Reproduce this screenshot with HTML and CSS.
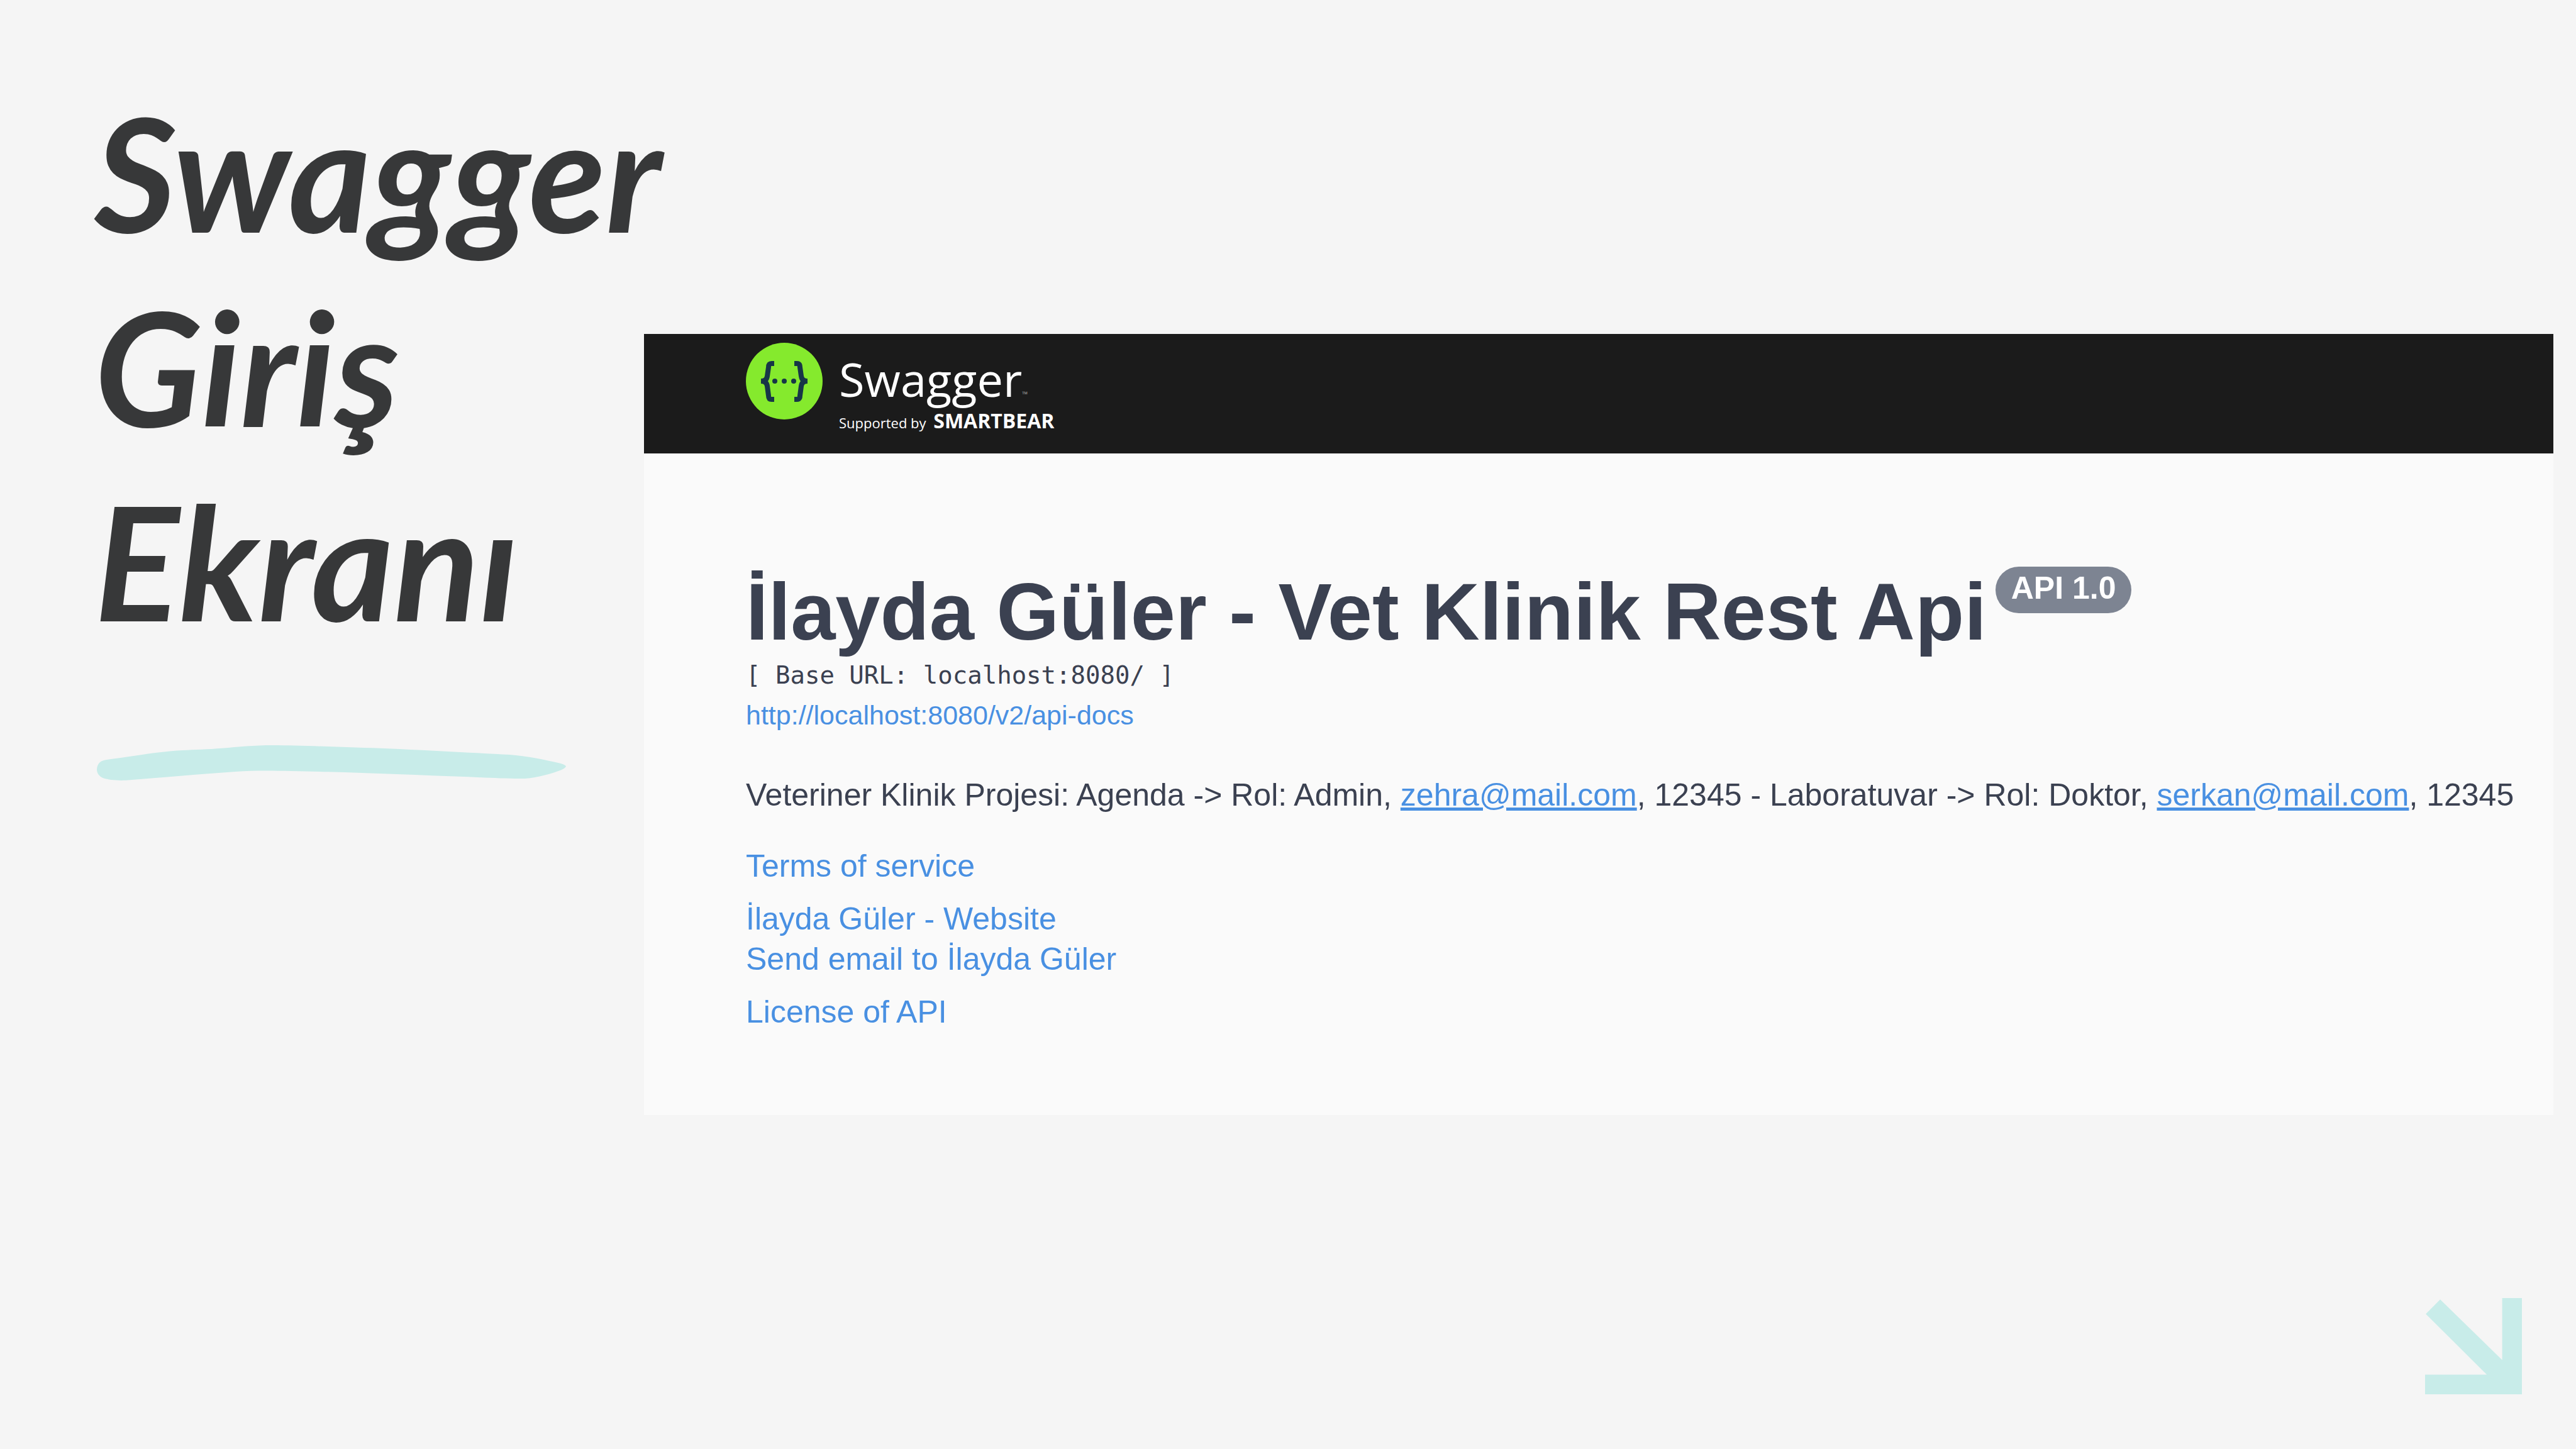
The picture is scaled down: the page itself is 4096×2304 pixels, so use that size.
FILE: index.html
```html
<!DOCTYPE html>
<html lang="tr">
<head>
<meta charset="utf-8">
<meta name="viewport" content="width=device-width, initial-scale=1">
<title>Swagger Giriş Ekranı</title>
<link rel="stylesheet" href="styles.css">
</head>
<body>
<div class="slide">
  <header class="intro">
    <h1 class="intro-title"><span>Swagger</span> <span>Giriş</span> <span>Ekranı</span></h1>
    <svg class="brush" viewBox="95 258 1370 245" preserveAspectRatio="none" aria-hidden="true">
      <path d="M130 356C190 339 270 303 345 293C380 289 420 287 460 279C510 269 550 258 610 258C700 259 850 274 945 281C1060 293 1190 310 1300 324C1350 333 1405 360 1450 385Q1465 397 1465 406Q1463 417 1450 431C1420 457 1385 483 1345 490C1300 492 1240 485 1180 478C1040 466 900 452 770 443C700 438 640 437 590 435C560 435 530 437 500 442C390 460 290 482 180 502C150 505 130 498 115 488C100 473 95 450 95 424C97 385 104 361 130 356Z"/>
    </svg>
  </header>

  <main class="panel">
    <div class="topbar">
      <a class="logo" href="#">
        <svg class="logo-mark" viewBox="0 0 122 122" aria-hidden="true">
          <circle class="mark-disc" cx="61" cy="61" r="61"/>
          <path class="mark-brace" d="M45 33H41Q36 33 36 39L34 53Q33 61 24 61Q33 61 34 69L36 84Q36 90 41 90H45"/>
          <path class="mark-brace" d="M77 33H81Q86 33 86 39L88 53Q89 61 98 61Q89 61 88 69L86 84Q86 90 81 90H77"/>
          <g class="mark-dots"><circle cx="46" cy="61" r="4"/><circle cx="61" cy="61" r="4"/><circle cx="76" cy="61" r="4"/></g>
        </svg>
        <span class="logo-text">
          <span class="wordmark">Swagger<small class="tm">™</small></span>
          <span class="support">Supported by <strong class="brand">SMARTBEAR</strong></span>
        </span>
      </a>
    </div>

    <section class="info">
      <div class="info-head">
        <h2 class="info-title">İlayda Güler - Vet Klinik Rest Api</h2>
        <span class="version">API 1.0</span>
      </div>
      <p class="base-url">[ Base URL: localhost:8080/ ]</p>
      <a class="docs-link" href="#">http://localhost:8080/v2/api-docs</a>
      <p class="description">Veteriner Klinik Projesi: Agenda -&gt; Rol: Admin, <a href="#">zehra@mail.com</a>, 12345 - Laboratuvar -&gt; Rol: Doktor, <a href="#">serkan@mail.com</a>, 12345</p>
      <div class="links">
        <a href="#">Terms of service</a>
        <div class="contact">
          <a href="#">İlayda Güler - Website</a>
          <a href="#">Send email to İlayda Güler</a>
        </div>
        <a href="#">License of API</a>
      </div>
    </section>
  </main>

  <footer class="corner">
    <svg class="arrow" viewBox="144 131 678 672" preserveAspectRatio="none" aria-hidden="true">
      <path d="M684 131H822V803H144V666H576L149 242L250 141L684 564Z"/>
    </svg>
  </footer>
</div>
</body>
</html>
```
FILE: styles.css
```css
* {
  box-sizing: border-box;
}

body {
  margin: 0;
  background: #f5f5f5;
  color: #3b4151;
  font-family: "Liberation Sans", Arial, sans-serif;
}

h1, h2, p {
  margin: 0;
}

a {
  color: #4990e2;
  text-decoration: none;
}

svg {
  display: block;
}

.slide {
  min-height: 100vh;
  display: grid;
  grid-template-columns: minmax(0, 1fr) minmax(0, 3fr);
  grid-template-rows: auto 1fr;
}

/* Left column: heading and brush stroke */
.intro {
  padding: 118px 0 0 150px;
}

.intro-title {
  color: #373839;
  font-family: Lato, sans-serif;
  font-size: 252px;
  font-style: italic;
  font-weight: 700;
  line-height: 309px;
  white-space: nowrap;
}

.intro-title span {
  display: block;
}

.brush {
  width: 746px;
  height: 56px;
  margin: 140px 0 0 4px;
  fill: #c8ece9;
}

/* Swagger panel */
.panel {
  margin: 531px 36px 0 0;
  background: #fafafa;
}

.topbar {
  height: 190px;
  padding-left: 162px;
  background: #1b1b1b;
}

.logo {
  display: inline-flex;
  align-items: flex-start;
  gap: 26px;
  color: #fff;
  font-family: "Open Sans", sans-serif;
}

.logo-mark {
  width: 122px;
  height: 122px;
  margin-top: 14px;
}

.mark-disc {
  fill: #85ea2d;
}

.mark-brace {
  fill: none;
  stroke: #173647;
  stroke-width: 8;
}

.mark-dots {
  fill: #173647;
}

.logo-text {
  display: flex;
  flex-direction: column;
  padding-top: 24px;
}

.wordmark {
  font-size: 74px;
  line-height: 96px;
}

.tm {
  color: #999;
  font-size: 12px;
  line-height: 12px;
}

.support {
  font-size: 22px;
  line-height: 36px;
}

.brand {
  margin-left: 6px;
  font-size: 32px;
  font-weight: 700;
}

.info {
  display: flex;
  flex-direction: column;
  align-items: flex-start;
  padding: 180px 0 132px 162px;
}

.info-head {
  display: flex;
  align-items: flex-start;
  gap: 14px;
}

.info-title {
  font-size: 128px;
  line-height: 144px;
  white-space: nowrap;
}

.version {
  padding: 0 25px 6px;
  border-radius: 37px;
  background: #7d8492;
  color: #fff;
  font-size: 50px;
  font-weight: 700;
  line-height: 68px;
  white-space: nowrap;
}

.base-url {
  font-family: "DejaVu Sans Mono", monospace;
  font-size: 39px;
  line-height: 58px;
}

.docs-link {
  font-size: 43px;
  line-height: 68px;
}

.description {
  margin-top: 61px;
  font-size: 50px;
  line-height: 64px;
  white-space: nowrap;
}

.description a {
  text-decoration: underline;
}

.links {
  display: flex;
  flex-direction: column;
  align-items: flex-start;
  gap: 20px;
  margin-top: 49px;
  font-size: 50px;
  line-height: 64px;
}

.contact {
  display: flex;
  flex-direction: column;
}

/* Corner arrow */
.corner {
  grid-column: 1 / -1;
  display: flex;
  align-items: flex-end;
  justify-content: flex-end;
  padding: 0 86px 87px;
}

.arrow {
  width: 154px;
  height: 153px;
  fill: #c8ece9;
}
```
